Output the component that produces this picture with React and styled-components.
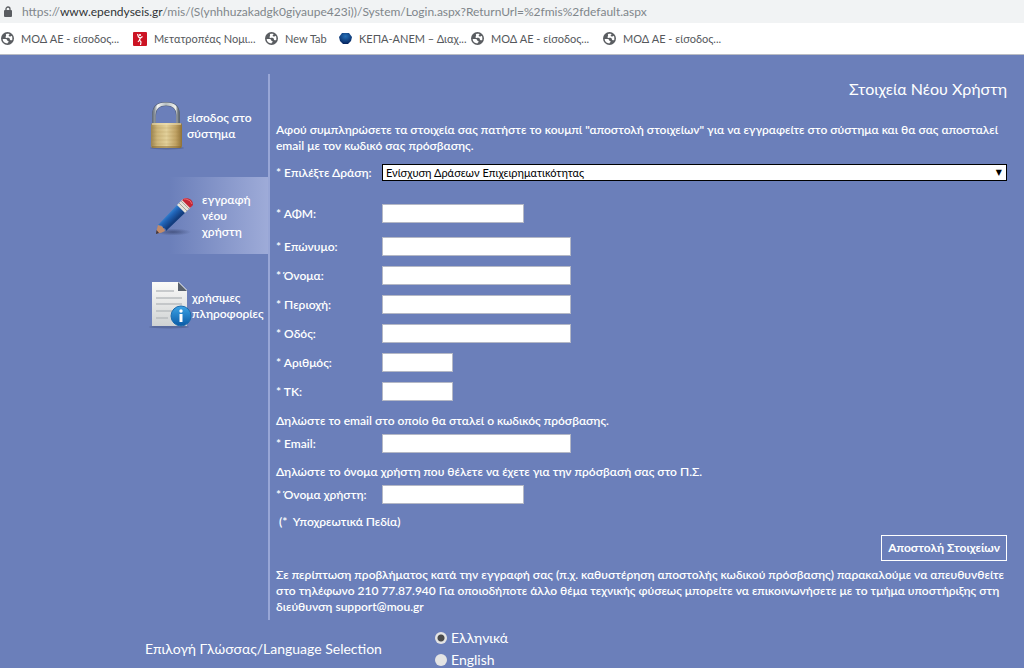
import React, { useState } from 'react'
import styled, { createGlobalStyle } from 'styled-components'

const GlobalStyle = createGlobalStyle`
    html {
        scrollbar-width: none;
    }
    body {
        margin: 0;
        background: #6b7fba;
        color: white;
        font: 600 12px/16px Lato, "Open Sans", sans-serif;
    }
    * {
        box-sizing: border-box;
    }
`

const links = [
    { icon: 'globe', text: 'ΜΟΔ ΑΕ - είσοδος...', width: 132 },
    { icon: 'dancer', text: 'Μετατροπέας Νομι...', width: 132 },
    { icon: 'globe', text: 'New Tab', width: 74 },
    { icon: 'emblem', text: 'ΚΕΠΑ-ΑΝΕΜ – Διαχ...', width: 132 },
    { icon: 'globe', text: 'ΜΟΔ ΑΕ - είσοδος...', width: 132 },
    { icon: 'globe', text: 'ΜΟΔ ΑΕ - είσοδος...', width: 132 },
]

const address = [
    { id: 'surname', label: 'Επώνυμο', width: 189 },
    { id: 'name', label: 'Όνομα', width: 189 },
    { id: 'area', label: 'Περιοχή', width: 189 },
    { id: 'street', label: 'Οδός', width: 189 },
    { id: 'number', label: 'Αριθμός', width: 71 },
    { id: 'zip', label: 'ΤΚ', width: 71 },
]

const Globe = () => (
    <svg width="13" height="13" viewBox="0 0 24 24" aria-hidden="true">
        <circle cx="12" cy="12" r="12" fill="#5a5d61" />
        <path fill="#fff" d="M3 13h6c2 0 2 2 3 3s2 0 2 2-2 1-2 3C7 21 3 18 3 13z" />
        <path fill="#fff" d="M9 4c0 2 1 3 0 4s-1 3 1 3 5-1 6 1 0 3 2 3 2 1 3-1c0-3 0-5-1-7-1 1-3 2-5 1s0-3 1-4c-2-1-5-1-7 0z" />
    </svg>
)

const Dancer = () => (
    <svg width="14" height="14" viewBox="0 0 14 14" aria-hidden="true">
        <rect width="14" height="14" rx="1" fill="#cc1424" />
        <circle cx="7" cy="3" r="1.1" fill="#fff" />
        <path d="M4.500 2l1 3 2 1 2-1.500M7.500 5.500L6.500 8l1.500 2-.5 3M6.500 8L5 10" fill="none" stroke="#fff" strokeWidth="1.200" />
    </svg>
)

const Emblem = () => (
    <svg width="13" height="13" viewBox="0 0 13 13" aria-hidden="true">
        <defs>
            <radialGradient id="emblem" cx=".5" cy=".3" r=".7">
                <stop offset="0" stopColor="#2470b8" />
                <stop offset="1" stopColor="#06245e" />
            </radialGradient>
        </defs>
        <path d="M3 1h7l3 4-1 4-3 3H4L1 9 0 5z" fill="url(#emblem)" />
    </svg>
)

const icons = { globe: Globe, dancer: Dancer, emblem: Emblem }

const SmallLock = () => (
    <svg width="8" height="11" viewBox="0 0 8 11" aria-hidden="true">
        <path d="M2 5V3a2 2 0 0 1 4 0v2" fill="none" stroke="#5a5d61" strokeWidth="1.300" />
        <rect y="4" width="8" height="7" rx="1" fill="#5a5d61" />
    </svg>
)

const Padlock = () => (
    <svg width="36" height="50" viewBox="0 0 36 50" aria-hidden="true">
        <defs>
            <linearGradient id="brass">
                <stop offset="0" stopColor="#9c8450" />
                <stop offset=".2" stopColor="#cdb57a" />
                <stop offset=".5" stopColor="#e2d09a" />
                <stop offset=".8" stopColor="#c0a264" />
                <stop offset="1" stopColor="#8f7136" />
            </linearGradient>
            <linearGradient id="steel">
                <stop offset="0" stopColor="#77808a" />
                <stop offset=".15" stopColor="#f4f6f6" />
                <stop offset=".5" stopColor="#b4bcc0" />
                <stop offset=".9" stopColor="#f0f2ee" />
                <stop offset="1" stopColor="#68717a" />
            </linearGradient>
        </defs>
        <ellipse cx="18" cy="47" rx="17" ry="1.500" fill="#46547f" opacity=".5" />
        <path d="M5 25V14C5 6 10 3 17 3s12 3 12 11v11" fill="none" stroke="#505b72" strokeWidth="4" />
        <path d="M5 25V14C5 6 10 3 17 3s12 3 12 11v11" fill="none" stroke="url(#steel)" strokeWidth="3" />
        <rect x="2" y="22" width="31" height="25" rx="2" fill="url(#brass)" />
        <path d="M3 23h29" stroke="#f2e6bd" />
        <path d="M3 27h29M3 31h29M3 35h29M3 39h29M3 43h29" stroke="#9c7f42" strokeWidth=".6" opacity=".3" />
        <path d="M3 46h29" stroke="#84662f" />
    </svg>
)

const Pencil = () => (
    <svg width="40" height="40" viewBox="0 0 40 40" aria-hidden="true">
        <defs>
            <linearGradient id="wood" x1=".3" y1=".3" x2=".6" y2=".6">
                <stop offset="0" stopColor="#4b9be0" />
                <stop offset=".5" stopColor="#2064b8" />
                <stop offset="1" stopColor="#133d7e" />
            </linearGradient>
            <radialGradient id="shade">
                <stop offset="0" stopColor="#3e4b76" stopOpacity=".8" />
                <stop offset="1" stopColor="#3e4b76" stopOpacity="0" />
            </radialGradient>
        </defs>
        <ellipse cx="18" cy="36" rx="18" ry="3.500" fill="url(#shade)" />
        <path d="M3 29l-2 8q4 1 9-2l-2-4z" fill="#c18b69" />
        <path d="M1.500 34l2.500 3-3 1z" fill="#3c3440" />
        <path d="M3 29L25 6l8 8L11 35q0-3-3-3 0-3-5-3z" fill="url(#wood)" />
        <path d="M22 9l6-6 8 8-6 6z" fill="#e5e3dc" />
        <path d="M24 7l8 8M26 5l8 8" stroke="#aaa494" />
        <path d="M27 4l3-2q8 0 8 7l-3 3z" fill="#c52635" />
        <path d="M29 3l2 0q5 1 6 5" fill="none" stroke="#ec6c70" />
    </svg>
)

const Document = () => (
    <svg width="43" height="50" viewBox="0 0 43 50" aria-hidden="true">
        <defs>
            <linearGradient id="paper" x2="0" y2="1">
                <stop offset="0" stopColor="#fbfbf9" />
                <stop offset="1" stopColor="#cfd2d3" />
            </linearGradient>
            <linearGradient id="info" x2="0" y2="1">
                <stop offset="0" stopColor="#3ba4e6" />
                <stop offset="1" stopColor="#0a5aa6" />
            </linearGradient>
        </defs>
        <ellipse cx="20" cy="46" rx="20" ry="1.500" fill="#46547f" opacity=".5" />
        <path d="M3 1h27l8 8v36H3z" fill="url(#paper)" />
        <path d="M29 1l9 9h-9z" fill="#59616c" />
        <path d="M7 10h18M7 17h26M7 23h26M7 30h18M7 37h12" stroke="#b9bdc0" strokeWidth="1.500" />
        <circle cx="32" cy="35" r="10" fill="url(#info)" stroke="#1c6cae" />
        <circle cx="32" cy="30" r="1.700" fill="#fff" />
        <path d="M32 33v8" stroke="#fff" strokeWidth="3" />
    </svg>
)

const Field = ({ id, label, width }) => (
    <FieldRow>
        <label htmlFor={id}>* {label}:</label>
        <TextInput id={id} name={id} type="text" $width={width} />
    </FieldRow>
)

export default function App() {
    const [lang, setLang] = useState('el')

    return (
        <>
            <GlobalStyle />
            <AddressBar>
                <SmallLock />
                <Url>https://<b>www.ependyseis.gr</b>/mis/(S(ynhhuzakadgk0giyaupe423i))/System/Login.aspx?ReturnUrl=%2fmis%2fdefault.aspx</Url>
            </AddressBar>
            <Bookmarks>
                {links.map((link, i) => {
                    const Icon = icons[link.icon]
                    return (
                        <Bookmark key={i} href="#" $width={link.width}>
                            <Icon />
                            <span>{link.text}</span>
                        </Bookmark>
                    )
                })}
            </Bookmarks>
            <Main>
                <Sidebar>
                    <MenuItem href="#" $gap={2}>
                        <Padlock />
                        <span>είσοδος στο<br />σύστημα</span>
                    </MenuItem>
                    <MenuItem href="#" $active $gap={7}>
                        <Pencil />
                        <span>εγγραφή<br />νέου<br />χρήστη</span>
                    </MenuItem>
                    <MenuItem href="#" $gap={0}>
                        <Document />
                        <span>χρήσιμες<br />πληροφορίες</span>
                    </MenuItem>
                </Sidebar>
                <Form onSubmit={(e) => e.preventDefault()}>
                    <Title>Στοιχεία Νέου Χρήστη</Title>
                    <Text $top={18}>
                        Αφού συμπληρώσετε τα στοιχεία σας πατήστε το κουμπί "αποστολή στοιχείων" για να εγγραφείτε στο σύστημα και θα σας αποσταλεί email με τον κωδικό σας πρόσβασης.
                    </Text>
                    <Group $top={4}>
                        <FieldRow>
                            <label htmlFor="action">* Επιλέξτε Δράση:</label>
                            <SelectWrap>
                                <Select id="action">
                                    <option>Ενίσχυση Δράσεων Επιχειρηματικότητας</option>
                                </Select>
                            </SelectWrap>
                        </FieldRow>
                    </Group>
                    <Group $top={12}>
                        <Field id="afm" label="ΑΦΜ" width={142} />
                    </Group>
                    <Group $top={4}>
                        {address.map((f) => <Field key={f.id} {...f} />)}
                    </Group>
                    <Text $top={7}>Δηλώστε το email στο οποίο θα σταλεί ο κωδικός πρόσβασης.</Text>
                    <Field id="email" label="Email" width={189} />
                    <Text $top={6}>Δηλώστε το όνομα χρήστη που θέλετε να έχετε για την πρόσβασή σας στο Π.Σ.</Text>
                    <Field id="username" label="Όνομα χρήστη" width={142} />
                    <Text $top={5} $indent>(*&nbsp; Υποχρεωτικά Πεδία)</Text>
                    <Submit type="submit">Αποστολή Στοιχείων</Submit>
                    <Text $top={6}>
                        Σε περίπτωση προβλήματος κατά την εγγραφή σας (π.χ. καθυστέρηση αποστολής κωδικού πρόσβασης) παρακαλούμε να απευθυνθείτε στο τηλέφωνο 210 77.87.940 Για οποιοδήποτε άλλο θέμα τεχνικής φύσεως μπορείτε να επικοινωνήσετε με το τμήμα υποστήριξης στη διεύθυνση support@mou.gr
                    </Text>
                </Form>
            </Main>
            <Language>
                <legend>Επιλογή Γλώσσας/Language Selection</legend>
                <Radios>
                    <label>
                        <Radio type="radio" name="lang" checked={lang === 'el'} onChange={() => setLang('el')} />
                        Ελληνικά
                    </label>
                    <label>
                        <Radio type="radio" name="lang" checked={lang === 'en'} onChange={() => setLang('en')} />
                        English
                    </label>
                </Radios>
            </Language>
        </>
    )
}

const AddressBar = styled.header`
    display: flex;
    align-items: center;
    gap: 10px;
    height: 23px;
    padding-left: 4px;
    background: #f1f3f4;
`

const Url = styled.span`
    color: #80868b;
    font: 12px/16px Lato, "Open Sans", sans-serif;
    white-space: nowrap;
    b {
        color: #303336;
        font-weight: 400;
    }
`

const Bookmarks = styled.nav`
    display: flex;
    align-items: center;
    height: 32px;
    padding-left: 1px;
    background: white;
    border-bottom: 1px solid #b9bcc4;
    overflow: hidden;
`

const Bookmark = styled.a`
    display: flex;
    align-items: center;
    gap: 7px;
    flex: none;
    width: ${(props) => props.$width}px;
    color: #55585c;
    font: 11px/16px Lato, "Open Sans", sans-serif;
    text-decoration: none;
    white-space: nowrap;
`

const Main = styled.main`
    display: flex;
    padding: 19px 17px 0 145px;
`

const Sidebar = styled.nav`
    flex: none;
    width: 125px;
    border-right: 2px solid #98a6d6;
`

const MenuItem = styled.a`
    display: flex;
    align-items: center;
    gap: ${(props) => props.$gap}px;
    height: ${(props) => (props.$active ? 77 : 103)}px;
    padding-left: ${(props) => (props.$active ? 10 : 4)}px;
    background: ${(props) => (props.$active ? 'linear-gradient(to right, #6b7fba 20%, #9eabd8)' : 'none')};
    color: white;
    text-decoration: none;
    white-space: nowrap;
    svg {
        flex: none;
    }
`

const Form = styled.form`
    flex: 1;
    min-width: 0;
    padding: 0 0 5px 6px;
`

const Title = styled.h1`
    margin: 0;
    font-size: 16px;
    font-weight: 400;
    line-height: 30px;
    text-align: right;
`

const Text = styled.p`
    margin: ${(props) => props.$top}px 0 0;
    padding-left: ${(props) => (props.$indent ? 3 : 0)}px;
`

const Group = styled.div`
    margin-top: ${(props) => props.$top}px;
`

const FieldRow = styled.div`
    display: grid;
    grid-template-columns: 106px 1fr;
    align-items: center;
    height: 29px;
    white-space: nowrap;
`

const TextInput = styled.input`
    width: ${(props) => props.$width}px;
    height: 19px;
    padding: 0 3px;
    border: 1px solid #b4b8c6;
    font: inherit;
`

const SelectWrap = styled.div`
    display: grid;
    align-items: center;
    &::after {
        content: "▼";
        grid-area: 1 / 1;
        justify-self: end;
        padding-right: 5px;
        color: black;
        font: 8px/12px "DejaVu Sans", sans-serif;
        pointer-events: none;
    }
`

const Select = styled.select`
    grid-area: 1 / 1;
    appearance: none;
    width: 100%;
    height: 17px;
    padding: 0 3px;
    border: 1px solid black;
    border-radius: 0;
    background: white;
    color: black;
    font: 11px/14px Lato, "Noto Sans", sans-serif;
`

const Submit = styled.button`
    display: block;
    height: 26px;
    margin: 5px 0 0 auto;
    padding: 0 6px;
    border: 1px solid white;
    background: transparent;
    color: white;
    font: inherit;
    font-weight: 700;
`

const Language = styled.fieldset`
    display: flex;
    align-items: center;
    margin: 10px 0 0;
    padding: 0 0 0 145px;
    border: 0;
    font-size: 14px;
    font-weight: 400;
    legend {
        float: left;
        width: 290px;
        padding: 0;
    }
`

const Radios = styled.div`
    display: grid;
    gap: 6px;
    label {
        display: flex;
        align-items: center;
        gap: 4px;
        height: 16px;
    }
`

const Radio = styled.input`
    appearance: none;
    width: 12px;
    height: 12px;
    margin: 0;
    border-radius: 50%;
    background: #e4e4e4;
    &:checked {
        background: radial-gradient(circle, #4a4a4a 3px, #e4e4e4 4px);
    }
`
